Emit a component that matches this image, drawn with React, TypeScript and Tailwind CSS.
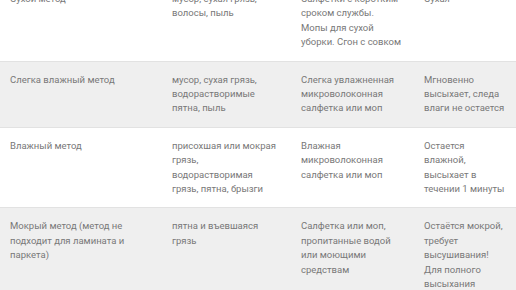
const rows = [
  {
    method: 'Сухой метод',
    dirt: 'мусор, сухая грязь, волосы, пыль',
    tool: ['Салфетки с коротким', 'сроком службы.', 'Мопы для сухой', 'уборки. Сгон с совком'],
    result: ['Сухая'],
  },
  {
    method: 'Слегка влажный метод',
    dirt: 'мусор, сухая грязь, водорастворимые пятна, пыль',
    tool: ['Слегка увлажненная', 'микроволоконная', 'салфетка или моп'],
    result: ['Мгновенно', 'высыхает, следа', 'влаги не остается'],
  },
  {
    method: 'Влажный метод',
    dirt: 'присохшая или мокрая грязь, водорастворимая грязь, пятна, брызги',
    tool: ['Влажная', 'микроволоконная', 'салфетка или моп'],
    result: ['Остается', 'влажной,', 'высыхает в', 'течении 1 минуты'],
  },
  {
    method: 'Мокрый метод (метод не подходит для ламината и паркета)',
    dirt: 'пятна и въевшаяся грязь',
    tool: ['Салфетка или моп,', 'пропитанные водой', 'или моющими', 'средствам'],
    result: ['Остаётся мокрой,', 'требует', 'высушивания!', 'Для полного', 'высыхания', 'требуется время'],
  },
];

function Lines({ lines }: { lines: string[] }) {
  return (
    <>
      {lines.map((l, i) => (
        <span key={i} className="block whitespace-nowrap">
          {l}
        </span>
      ))}
    </>
  );
}

export default function App() {
  return (
    <div className="h-[290px] w-[516px] overflow-hidden bg-white font-['Roboto',sans-serif] text-[9.5px] leading-[14.4px] text-[#787878]">
      <div className="-mt-[19px]">
        {rows.map((r, i) => (
          <div
            key={i}
            className={
              i % 2 === 1
                ? 'grid grid-cols-[162px_129px_133px_92px] border-b border-[#e2e2e2] bg-[#efefef]'
                : 'grid grid-cols-[162px_129px_133px_92px] border-b border-[#e2e2e2] bg-white'
            }
          >
            <div className="px-[10px] py-[11px]">{r.method}</div>
            <div className="px-[10px] py-[11px]">{r.dirt}</div>
            <div className="py-[11px] pl-[10px]">
              <Lines lines={r.tool} />
            </div>
            <div className="py-[11px]">
              <Lines lines={r.result} />
            </div>
          </div>
        ))}
      </div>
    </div>
  );
}
